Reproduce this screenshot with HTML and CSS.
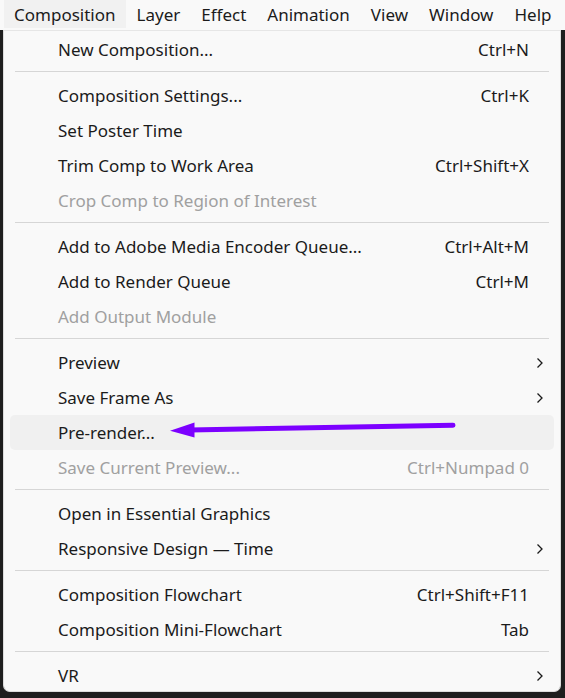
FILE: index.html
```html
<!DOCTYPE html>
<html>
<head>
<meta charset="utf-8">
<link rel="stylesheet" href="styles.css">
</head>
<body>
<div class="menubar">
  <span class="top active">Composition</span>
  <span class="top">Layer</span>
  <span class="top">Effect</span>
  <span class="top">Animation</span>
  <span class="top">View</span>
  <span class="top">Window</span>
  <span class="top">Help</span>
</div>
<div class="panel">
  <div class="item"><span>New Composition...</span><span class="sc">Ctrl+N</span></div>
  <div class="sep"></div>
  <div class="item"><span>Composition Settings...</span><span class="sc">Ctrl+K</span></div>
  <div class="item"><span>Set Poster Time</span></div>
  <div class="item"><span>Trim Comp to Work Area</span><span class="sc">Ctrl+Shift+X</span></div>
  <div class="item disabled"><span>Crop Comp to Region of Interest</span></div>
  <div class="sep"></div>
  <div class="item"><span>Add to Adobe Media Encoder Queue...</span><span class="sc">Ctrl+Alt+M</span></div>
  <div class="item"><span>Add to Render Queue</span><span class="sc">Ctrl+M</span></div>
  <div class="item disabled"><span>Add Output Module</span></div>
  <div class="sep"></div>
  <div class="item sub"><span>Preview</span><svg class="chev" viewBox="0 0 8 12"><path d="M1.5 1.5 L6 6 L1.5 10.5" /></svg></div>
  <div class="item sub"><span>Save Frame As</span><svg class="chev" viewBox="0 0 8 12"><path d="M1.5 1.5 L6 6 L1.5 10.5" /></svg></div>
  <div class="item hover"><span>Pre-render...</span></div>
  <div class="item disabled"><span>Save Current Preview...</span><span class="sc">Ctrl+Numpad 0</span></div>
  <div class="sep"></div>
  <div class="item"><span>Open in Essential Graphics</span></div>
  <div class="item sub"><span>Responsive Design — Time</span><svg class="chev" viewBox="0 0 8 12"><path d="M1.5 1.5 L6 6 L1.5 10.5" /></svg></div>
  <div class="sep"></div>
  <div class="item"><span>Composition Flowchart</span><span class="sc">Ctrl+Shift+F11</span></div>
  <div class="item"><span>Composition Mini-Flowchart</span><span class="sc">Tab</span></div>
  <div class="sep"></div>
  <div class="item sub"><span>VR</span><svg class="chev" viewBox="0 0 8 12"><path d="M1.5 1.5 L6 6 L1.5 10.5" /></svg></div>
  <svg class="arrow" width="565" height="698" viewBox="0 0 565 698">
    <line x1="453" y1="425.3" x2="190" y2="430" stroke="#7c00ff" stroke-width="5" stroke-linecap="round"/>
    <polygon points="170,430.8 194.5,422.5 194.5,437.5" fill="#7c00ff"/>
  </svg>
</div>
</body>
</html>
```
FILE: styles.css
```css
html, body {
  margin: 0;
  padding: 0;
}
body {
  width: 565px;
  height: 698px;
  background: #1e1e1e;
  font-family: "Noto Sans", "Open Sans", sans-serif;
  font-size: 17px;
  color: #1b1b1b;
  overflow: hidden;
  position: relative;
}
.menubar {
  height: 30px;
  background: #f9f9f9;
  display: flex;
  align-items: center;
  padding-left: 4px;
}
.top {
  height: 28px;
  align-self: flex-start;
  display: flex;
  align-items: center;
  padding: 0 10px;
  margin-right: 1px;
}
.top.active {
  background: #f1f1f1;
}
.panel {
  margin-left: 3px;
  width: 558px;
  height: 662px;
  padding-top: 1px;
  box-sizing: border-box;
  background: #f9f9f9;
  border: 1px solid #dcdcdc;
  border-top-color: #e6e6e6;
  border-radius: 0 0 7px 7px;
}
.item {
  height: 35px;
  margin: 0 6px;
  padding: 0 25px 0 48px;
  display: flex;
  align-items: center;
  justify-content: space-between;
  border-radius: 5px;
}
.item.hover {
  background: #f0f0f0;
}
.item.disabled {
  color: #a0a0a0;
}
.item.sub {
  padding-right: 10px;
}
.chev {
  width: 8px;
  height: 12px;
  fill: none;
  stroke: #1b1b1b;
  stroke-width: 1.3;
}
.sep {
  height: 1px;
  background: #d6d6d6;
  margin: 4px 11px 6px 11px;
}
.arrow {
  position: absolute;
  left: 0;
  top: 0;
  pointer-events: none;
}
```
